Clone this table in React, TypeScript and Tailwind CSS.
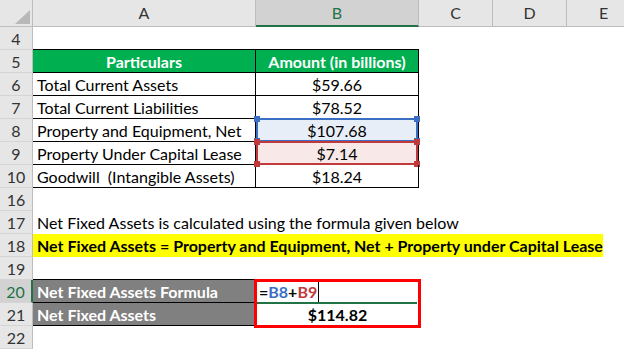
import React from "react";

const cols = [
  { label: "A", w: "w-[223px]" },
  { label: "B", w: "w-[163px]" },
  { label: "C", w: "w-[74px]" },
  { label: "D", w: "w-[74px]" },
  { label: "E", w: "w-[74px]" },
];

function RowHead({ n, active }: { n: number; active?: boolean }) {
  return (
    <div
      className={
        "w-[33px] shrink-0 h-full flex items-center justify-center pt-[1px] border-b border-[#d4d4d4] text-[16px] " +
        (active
          ? "bg-[#d2d2d2] text-[#217346] border-r-2 border-r-[#217346]"
          : "bg-[#e6e6e6] text-[#333] border-r border-r-[#bdbdbd]")
      }
    >
      {n}
    </div>
  );
}

function Row({ n, children, active }: { n: number; children?: React.ReactNode; active?: boolean }) {
  return (
    <div className="flex h-[23px]">
      <RowHead n={n} active={active} />
      {children}
    </div>
  );
}

function Sel({ box, dot }: { box: string; dot: string }) {
  // coloured reference box drawn over the cell while the formula is edited
  return (
    <div className={"absolute inset-x-0 -top-[1px] -bottom-[1px] border-2 " + box}>
      <span className={"absolute -left-[4px] -top-[4px] w-[6px] h-[6px] " + dot} />
      <span className={"absolute -right-[4px] -top-[4px] w-[6px] h-[6px] " + dot} />
      <span className={"absolute -left-[4px] -bottom-[4px] w-[6px] h-[6px] " + dot} />
      <span className={"absolute -right-[4px] -bottom-[4px] w-[6px] h-[6px] " + dot} />
    </div>
  );
}

const data = [
  ["Total Current Assets", "$59.66"],
  ["Total Current Liabilities", "$78.52"],
  ["Property and Equipment, Net", "$107.68"],
  ["Property Under Capital Lease", "$7.14"],
  ["Goodwill  (Intangible Assets)", "$18.24"],
];

export default function App() {
  return (
    <div className="w-[624px] h-[350px] overflow-hidden bg-white font-['Lato',sans-serif] text-[16px] text-black leading-none">
      {/* column headers */}
      <div className="flex h-[27px]">
        <div className="w-[33px] shrink-0 relative bg-[#e6e6e6] border-r border-b border-[#bdbdbd]">
          <svg className="absolute left-[15px] top-[10px]" width="15" height="14" viewBox="0 0 15 14">
            <polygon points="15,0 15,14 0,14" fill="#b8b8b8" />
          </svg>
        </div>
        {cols.map((c) => (
          <div
            key={c.label}
            className={
              c.w +
              " shrink-0 flex items-center justify-center text-[16px] " +
              (c.label === "B"
                ? "bg-[#d2d2d2] text-[#217346] border-b-2 border-[#217346] border-r border-r-[#bdbdbd]"
                : "bg-[#e6e6e6] text-[#333] border-b border-r border-[#bdbdbd]")
            }
          >
            {c.label}
          </div>
        ))}
      </div>

      <Row n={4}>
        <div className="w-[223px] border-b border-black" />
        <div className="w-[163px] border-b border-black" />
      </Row>

      <Row n={5}>
        <div className="w-[223px] bg-[#00b050] border-b border-r border-black flex items-center justify-center pt-[1px] font-bold text-white">
          Particulars
        </div>
        <div className="w-[163px] bg-[#00b050] border-b border-r border-black flex items-center justify-center pt-[1px] font-bold text-white">
          Amount (in billions)
        </div>
      </Row>

      {data.map(([label, val], i) => (
        <Row key={label} n={6 + i}>
          <div className="w-[223px] border-b border-r border-black flex items-center pl-[4px] pt-[1px] whitespace-pre">{label}</div>
          <div className="w-[163px] border-b border-r border-black flex items-center justify-center pt-[1px] relative">
            {i === 2 && <Sel box="border-[#3a6fc4] bg-[#e8eef8]" dot="bg-[#3a6fc4]" />}
            {i === 3 && <Sel box="border-[#c0393b] bg-[#f8e8e8]" dot="bg-[#c0393b]" />}
            <span className="relative">{val}</span>
          </div>
        </Row>
      ))}

      <Row n={16} />
      <Row n={17}>
        <div className="flex items-center pl-[4px] pt-[1px] whitespace-nowrap">
          Net Fixed Assets is calculated using the formula given below
        </div>
      </Row>
      <Row n={18}>
        <div className="w-[570px] bg-[#ffff00] flex items-center pl-[4px] pt-[1px] font-bold whitespace-nowrap">
          Net Fixed Assets = Property and Equipment, Net + Property under Capital Lease
        </div>
      </Row>
      <Row n={19}>
        <div className="w-[223px] border-b border-black" />
      </Row>

      <div className="flex">
        <div className="w-[33px] shrink-0">
          <div className="h-[23px]">
            <RowHead n={20} active />
          </div>
          <div className="h-[23px]">
            <RowHead n={21} />
          </div>
        </div>
        <div className="w-[223px] shrink-0">
          <div className="h-[23px] bg-[#808080] border-b border-black flex items-center pl-[4px] pt-[1px] font-bold text-white">
            Net Fixed Assets Formula
          </div>
          <div className="h-[23px] bg-[#808080] border-b border-black flex items-center pl-[4px] pt-[1px] font-bold text-white">
            Net Fixed Assets
          </div>
        </div>
        <div className="w-[163px] shrink-0 relative">
          <div className="h-[23px] flex items-center pl-[3px] font-bold relative">
            <span>=</span>
            <span className="text-[#3a6fc4]">B8</span>
            <span>+</span>
            <span className="text-[#c0393b]">B9</span>
            <span className="ml-[1px] w-[1px] h-[21px] bg-black" />
            <div className="absolute left-[1px] right-[2px] -bottom-[1px] h-[2px] bg-[#217346]" />
          </div>
          <div className="h-[23px] flex items-center justify-center pt-[1px] font-bold">$114.82</div>
          <div className="absolute -left-[2px] -right-[2px] -top-[1px] -bottom-[2px] border-[3px] border-[#ff0000]" />
        </div>
      </div>

      <Row n={22} />
    </div>
  );
}
